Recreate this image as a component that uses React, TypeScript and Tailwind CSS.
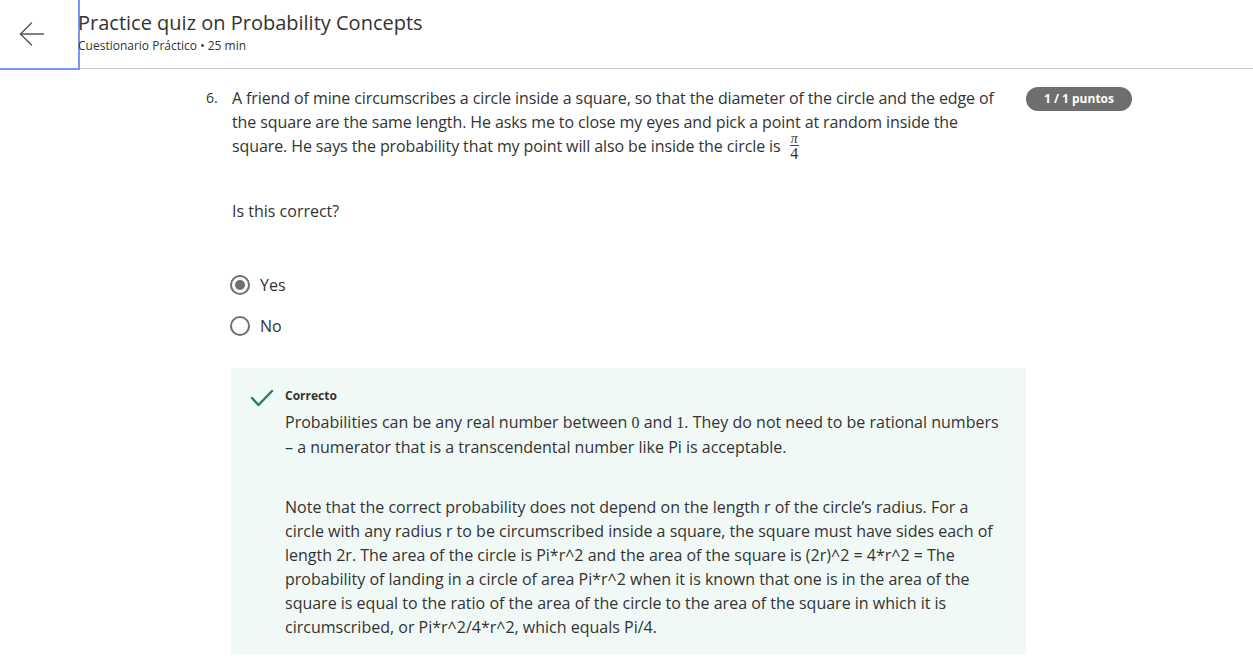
import React from "react";

export default function App() {
  return (
    <div className="w-[1253px] h-[670px] bg-white overflow-hidden text-[#1f1f1f]" style={{ fontFamily: '"Open Sans", "Noto Sans", sans-serif' }}>
      <header className="flex h-[69px] border-b border-[#c8c8c8]">
        <button className="w-[80px] h-[70px] flex items-center justify-start pl-[19px] border-r-2 border-b-2 border-[#7b96f2] shrink-0 -mb-[1px] bg-white">
          <svg width="26" height="26" viewBox="0 0 26 26" fill="none" stroke="#555" strokeWidth="1.4" strokeLinecap="round">
            <path d="M1.5 13H24.5" />
            <path d="M12.5 2L1.5 13L12.5 24" />
          </svg>
        </button>
        <div className="flex flex-col pt-[9px] -ml-[2px]">
          <h1 className="text-[20px] leading-[28px] text-[#333]">Practice quiz on Probability Concepts</h1>
          <p className="text-[12px] leading-[16px] text-[#333] mt-[1px]">Cuestionario Práctico • 25 min</p>
        </div>
      </header>

      <main className="flex pl-[206px] pt-[17px]">
        <div className="w-[26px] text-[14px] leading-[24px] text-[#333] shrink-0">6.</div>
        <div className="w-[794px] shrink-0">
          <p className="text-[16px] leading-[24px] text-[#333] w-[780px]" style={{ letterSpacing: "-0.1px" }}>
            A friend of mine circumscribes a circle inside a square, so that the diameter of the circle and the edge of the square are the same length. He asks me to close my eyes and pick a point at random inside the square. He says the probability that my point will also be inside the circle is{" "}
            <span className="inline-flex flex-col items-center align-middle leading-none ml-[5px] relative top-[-1px]" style={{ fontFamily: '"Liberation Serif", "DejaVu Serif", serif', letterSpacing: 0 }}>
              <span className="text-[14px] italic border-b border-[#444] px-[1px] leading-[12px]">π</span>
              <span className="text-[16px] leading-[15px]">4</span>
            </span>
          </p>
          <p className="text-[16px] leading-[24px] text-[#333] mt-[37px]">Is this correct?</p>

          <div className="mt-[50px] flex flex-col gap-[17px] -ml-[2px]">
            <label className="flex items-center gap-[10px] h-[24px]">
              <span className="w-[20px] h-[20px] rounded-full border-2 border-[#6f6f6f] flex items-center justify-center">
                <span className="w-[10px] h-[10px] rounded-full bg-[#6f6f6f]" />
              </span>
              <span className="text-[16px] text-[#333]">Yes</span>
            </label>
            <label className="flex items-center gap-[10px] h-[24px]">
              <span className="w-[20px] h-[20px] rounded-full border-2 border-[#6f6f6f]" />
              <span className="text-[16px] text-[#333]">No</span>
            </label>
          </div>

          <div className="mt-[30px] -ml-[1px] w-[795px] h-[286px] bg-[#f1f9f6] flex pt-[18px]">
            <div className="w-[54px] flex justify-end pr-[11px] pt-[2px]">
              <svg width="24" height="20" viewBox="0 0 24 20" fill="none" stroke="#1f8354" strokeWidth="2.4" strokeLinecap="round" strokeLinejoin="round">
                <path d="M2 10L8.5 17L22 3" />
              </svg>
            </div>
            <div className="w-[722px]">
              <p className="text-[12px] font-bold leading-[20px] text-[#333]">Correcto</p>
              <p className="text-[16px] leading-[24px] text-[#333] mt-[4px]">
                Probabilities can be any real number between <span style={{ fontFamily: '"Liberation Serif", serif' }}>0</span> and <span style={{ fontFamily: '"Liberation Serif", serif' }}>1</span>. They do not need to be rational numbers – a numerator that is a transcendental number like Pi is acceptable.
              </p>
              <p className="text-[16px] leading-[24px] text-[#333] mt-[36px] w-[712px]">
                Note that the correct probability does not depend on the length r of the circle’s radius. For a circle with any radius r to be circumscribed inside a square, the square must have sides each of length 2r. The area of the circle is Pi*r^2 and the area of the square is (2r)^2 = 4*r^2 = The probability of landing in a circle of area Pi*r^2 when it is known that one is in the area of the square is equal to the ratio of the area of the circle to the area of the square in which it is circumscribed, or Pi*r^2/4*r^2, which equals Pi/4.
              </p>
            </div>
          </div>
        </div>
        <div className="shrink-0 -mt-[1px]">
          <span className="inline-flex items-center justify-center w-[106px] h-[24px] rounded-full bg-[#6e6e6e] text-white text-[12px] font-bold">1 / 1 puntos</span>
        </div>
      </main>
    </div>
  );
}
